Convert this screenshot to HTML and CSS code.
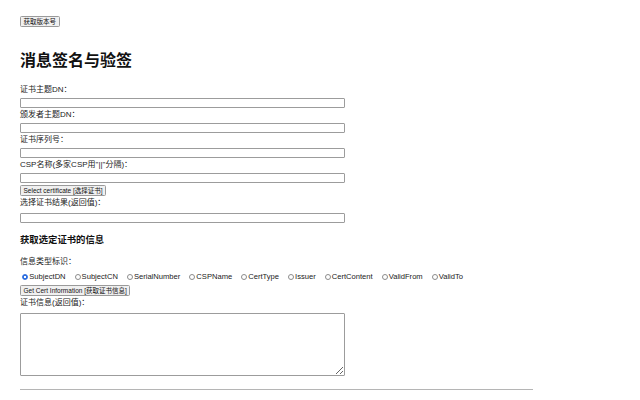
FILE: index.html
```html
<!DOCTYPE html>
<html lang="zh-CN">
<head>
<meta charset="utf-8">
<title>消息签名与验签</title>
<link rel="stylesheet" href="styles.css">
</head>
<body>
<div class="page">
  <button class="btn btn-top" type="button">获取版本号</button>
  <h1 class="title">消息签名与验签</h1>

  <div class="field">
    <label class="lbl">证书主题DN：</label>
    <input class="txt" type="text">
  </div>
  <div class="field">
    <label class="lbl">颁发者主题DN：</label>
    <input class="txt" type="text">
  </div>
  <div class="field">
    <label class="lbl">证书序列号：</label>
    <input class="txt" type="text">
  </div>
  <div class="field field-tight">
    <label class="lbl">CSP名称(多家CSP用"||"分隔)：</label>
    <input class="txt" type="text">
  </div>
  <button class="btn btn-select" type="button">Select certificate [选择证书]</button>
  <div class="field field-loose">
    <label class="lbl">选择证书结果(返回值)：</label>
    <input class="txt" type="text">
  </div>

  <h3 class="subtitle">获取选定证书的信息</h3>
  <div class="lbl lbl-plain">信息类型标识：</div>
  <div class="options">
    <label class="opt"><input type="radio" name="t" checked>SubjectDN</label>
    <label class="opt"><input type="radio" name="t">SubjectCN</label>
    <label class="opt"><input type="radio" name="t">SerialNumber</label>
    <label class="opt"><input type="radio" name="t">CSPName</label>
    <label class="opt"><input type="radio" name="t">CertType</label>
    <label class="opt"><input type="radio" name="t">Issuer</label>
    <label class="opt"><input type="radio" name="t">CertContent</label>
    <label class="opt"><input type="radio" name="t">ValidFrom</label>
    <label class="opt"><input type="radio" name="t">ValidTo</label>
  </div>
  <button class="btn btn-info" type="button">Get Cert Information [获取证书信息]</button>
  <div class="lbl lbl-info">证书信息(返回值)：</div>
  <textarea class="area"></textarea>
  <hr class="rule">
</div>
</body>
</html>
```

FILE: styles.css
```css
html, body {
  margin: 0;
  padding: 0;
  background: #ffffff;
}

body {
  font-family: "Liberation Sans", Arial, "Noto Sans CJK SC", sans-serif;
  color: #111;
}

.page {
  padding: 16px 0 0 20px;
}

.btn {
  display: block;
  height: 11px;
  padding: 0 2.5px;
  margin: 0;
  font-family: "Liberation Sans", Arial, "Noto Sans CJK SC", sans-serif;
  font-size: 6.5px;
  line-height: 9px;
  color: #111;
  background: #f0f0f0;
  border: 1px solid #9a9a9a;
  border-radius: 1.5px;
  box-sizing: border-box;
}

.title {
  margin: 24.5px 0 15.5px;
  font-size: 16px;
  line-height: 18px;
  font-weight: bold;
  color: #111;
}

.field {
  display: flex;
  flex-direction: column;
  align-items: flex-start;
}

.lbl {
  display: block;
  font-size: 8px;
  line-height: 10px;
  color: #222;
}

.txt {
  display: block;
  width: 325px;
  height: 10px;
  margin: 2.5px 0 2.5px;
  padding: 0 2px;
  box-sizing: border-box;
  border: 1px solid #9c9c9c;
  border-radius: 1px;
  background: #fff;
  font-size: 7px;
}

.field-tight .txt {
  margin-bottom: 2px;
}

.field-loose {
  margin-top: 2px;
}

.field-loose .txt {
  margin-top: 5px;
}

.subtitle {
  margin: 9.5px 0 11.5px;
  font-size: 9.36px;
  line-height: 11px;
  font-weight: bold;
  color: #111;
}

.options {
  display: flex;
  align-items: center;
  height: 10px;
  margin-top: 5px;
  padding-left: 2.3px;
}

.opt {
  display: flex;
  align-items: center;
  margin-right: 9px;
  font-size: 7.6px;
  line-height: 10px;
  color: #222;
}

.opt:last-child {
  margin-right: 0;
}

.opt input {
  appearance: none;
  -webkit-appearance: none;
  width: 6px;
  height: 6px;
  margin: 0 1px 0 0;
  border: 0.6px solid #8c8c8c;
  border-radius: 50%;
  background: #fff;
  box-sizing: border-box;
}

.opt input:checked {
  border-color: #2f6fe0;
  background: radial-gradient(circle, #ffffff 0 1.1px, #2f6fe0 1.4px);
}

.btn-select {
  margin-top: 0;
}

.btn-info {
  margin-top: 3px;
}

.lbl-info {
  margin-top: 2px;
}

.area {
  display: block;
  width: 325px;
  height: 63px;
  margin: 5px 0 0;
  box-sizing: border-box;
  border: 1px solid #9c9c9c;
  border-radius: 1px;
  resize: both;
  font-size: 7px;
}

.rule {
  width: 513px;
  margin: 13px 0 0;
  border: 0;
  border-top: 1px solid #b5b5b5;
  height: 0;
}
```
